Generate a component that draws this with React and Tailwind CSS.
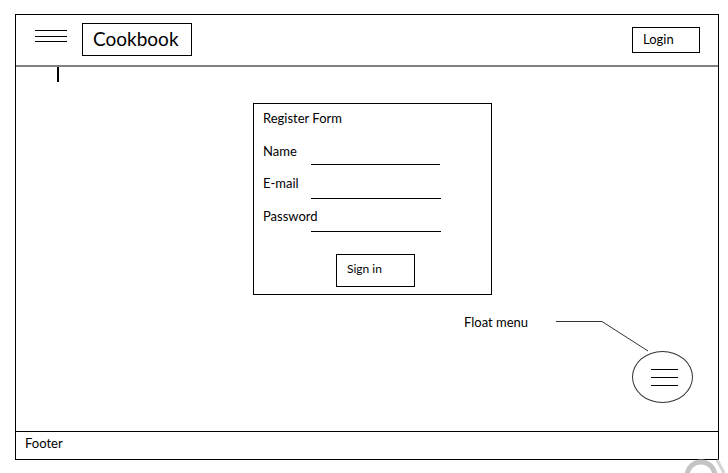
import React from 'react';

const font = { fontFamily: 'Lato, "Open Sans", sans-serif' };

const FormRow = ({ label, lineH, rowH, lineW = 'w-[130px]' }) => (
  <div className={`flex items-start ${rowH}`}>
    <span className="w-[48px] text-[13px] leading-[18px] text-black">{label}</span>
    <div className={`${lineW} ${lineH} border-b border-black`} />
  </div>
);

export default function App() {
  return (
    <div className="relative w-[728px] h-[473px] bg-white pt-[14px] pl-[15px] overflow-hidden" style={font}>
      {/* Wireframe frame */}
      <div className="w-[704px] h-[446px] border border-black flex flex-col">
        {/* Header */}
        <header className="h-[52px] shrink-0 border-b-2 border-[#808080] flex items-start pl-[19px] pr-[18px]">
          <div className="mt-[15px] w-[32px] flex flex-col gap-[4.5px]">
            <span className="h-px bg-black" />
            <span className="h-px bg-black" />
            <span className="h-px bg-black" />
          </div>
          <div className="ml-[15px] mt-[8px] w-[110px] h-[33px] border border-black pl-[10px] pt-[3px] text-[19px] leading-[24px] text-black">
            Cookbook
          </div>
          <div className="ml-auto mt-[12px] w-[68px] h-[26px] border border-black pl-[10px] pt-[2px] text-[13px] leading-[18px] text-black">
            Login
          </div>
        </header>

        {/* Main */}
        <main className="relative flex-1 pt-[36px] pl-[237px]">
          {/* caret */}
          <span className="absolute left-[41px] top-0 w-[2px] h-[15px] bg-black" />

          {/* Register form */}
          <div className="w-[239px] h-[192px] border border-black pl-[9px] pt-[5px]">
            <div className="h-[33px] text-[13px] leading-[18px] text-black">Register Form</div>
            <FormRow label="Name" rowH="h-[32px]" lineH="h-[23px]" lineW="w-[129px]" />
            <FormRow label="E-mail" rowH="h-[33px]" lineH="h-[25px]" />
            <FormRow label="Password" rowH="h-[47px]" lineH="h-[25px]" />
            <div className="ml-[73px] w-[79px] h-[33px] border border-black pl-[10px] pt-[6px] text-[12px] leading-[16px] text-black">
              Sign in
            </div>
          </div>

          {/* Float menu annotation */}
          <span className="absolute left-[448px] top-[246px] text-[13px] leading-[18px] text-black">Float menu</span>
          <svg className="absolute left-0 top-0 pointer-events-none" width="700" height="360">
            <polyline points="540,254.5 586,254.5 632,284" fill="none" stroke="#333" strokeWidth="1" />
          </svg>
          <button className="absolute left-[616px] top-[284px] w-[61px] h-[52px] rounded-[50%] border border-[#333] flex flex-col items-center justify-center gap-[7px] pl-[4px]">
            <span className="w-[27px] h-px bg-black" />
            <span className="w-[27px] h-px bg-black" />
            <span className="w-[27px] h-px bg-black" />
          </button>
        </main>

        {/* Footer */}
        <footer className="h-[28px] shrink-0 border-t border-black pl-[9px] pt-[2px] text-[13px] leading-[18px] text-black">
          Footer
        </footer>
      </div>

      {/* watermark corner */}
      <svg className="absolute left-[682px] top-[450px]" width="46" height="23">
        <circle cx="19" cy="26" r="14" fill="none" stroke="#c4c4c4" strokeWidth="5" />
        <line x1="35" y1="10" x2="42" y2="23" stroke="#d4d4d4" strokeWidth="3" />
      </svg>
    </div>
  );
}
